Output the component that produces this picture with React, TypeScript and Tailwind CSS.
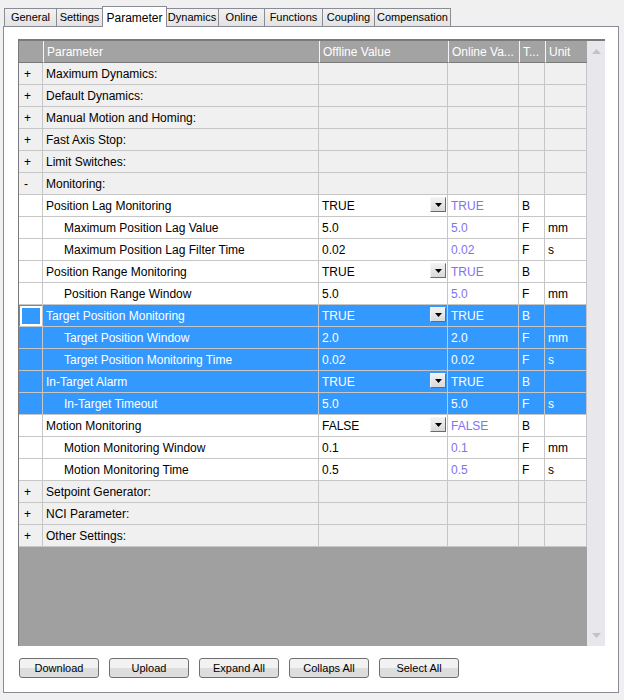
import React from 'react';

type Row = {
  sign?: string;
  name: string;
  level: 0 | 1 | 2;
  offline?: string;
  online?: string;
  type?: string;
  unit?: string;
  combo?: boolean;
  selected?: boolean;
  focused?: boolean;
};

const rows: Row[] = [
  { sign: '+', name: 'Maximum Dynamics:', level: 0 },
  { sign: '+', name: 'Default Dynamics:', level: 0 },
  { sign: '+', name: 'Manual Motion and Homing:', level: 0 },
  { sign: '+', name: 'Fast Axis Stop:', level: 0 },
  { sign: '+', name: 'Limit Switches:', level: 0 },
  { sign: '-', name: 'Monitoring:', level: 0 },
  { name: 'Position Lag Monitoring', level: 1, offline: 'TRUE', online: 'TRUE', type: 'B', combo: true },
  { name: 'Maximum Position Lag Value', level: 2, offline: '5.0', online: '5.0', type: 'F', unit: 'mm' },
  { name: 'Maximum Position Lag Filter Time', level: 2, offline: '0.02', online: '0.02', type: 'F', unit: 's' },
  { name: 'Position Range Monitoring', level: 1, offline: 'TRUE', online: 'TRUE', type: 'B', combo: true },
  { name: 'Position Range Window', level: 2, offline: '5.0', online: '5.0', type: 'F', unit: 'mm' },
  { name: 'Target Position Monitoring', level: 1, offline: 'TRUE', online: 'TRUE', type: 'B', combo: true, selected: true, focused: true },
  { name: 'Target Position Window', level: 2, offline: '2.0', online: '2.0', type: 'F', unit: 'mm', selected: true },
  { name: 'Target Position Monitoring Time', level: 2, offline: '0.02', online: '0.02', type: 'F', unit: 's', selected: true },
  { name: 'In-Target Alarm', level: 1, offline: 'TRUE', online: 'TRUE', type: 'B', combo: true, selected: true },
  { name: 'In-Target Timeout', level: 2, offline: '5.0', online: '5.0', type: 'F', unit: 's', selected: true },
  { name: 'Motion Monitoring', level: 1, offline: 'FALSE', online: 'FALSE', type: 'B', combo: true },
  { name: 'Motion Monitoring Window', level: 2, offline: '0.1', online: '0.1', type: 'F', unit: 'mm' },
  { name: 'Motion Monitoring Time', level: 2, offline: '0.5', online: '0.5', type: 'F', unit: 's' },
  { sign: '+', name: 'Setpoint Generator:', level: 0 },
  { sign: '+', name: 'NCI Parameter:', level: 0 },
  { sign: '+', name: 'Other Settings:', level: 0 },
];

// widths taken from the tab strip
const tabs = [
  { label: 'General', w: 'w-[53px]' },
  { label: 'Settings', w: 'w-[47px]' },
  { label: 'Parameter', w: 'w-[65px]' },
  { label: 'Dynamics', w: 'w-[54px]' },
  { label: 'Online', w: 'w-[47px]' },
  { label: 'Functions', w: 'w-[59px]' },
  { label: 'Coupling', w: 'w-[53px]' },
  { label: 'Compensation', w: 'w-[77px]' },
];
const buttons = ['Download', 'Upload', 'Expand All', 'Collaps All', 'Select All'];

const cols = 'grid grid-cols-[24px_276px_129px_71px_26px_42px]';

function ComboButton() {
  return (
    <div className="absolute right-[1px] top-[2px] flex h-[15px] w-[16px] items-center justify-center border border-t-[#f4f4f4] border-l-[#f4f4f4] border-r-[#6b6b6b] border-b-[#6b6b6b] bg-gradient-to-b from-[#f2f2f2] to-[#d9d9d9]">
      <svg width="7" height="4" viewBox="0 0 7 4">
        <polygon points="0,0 7,0 3.5,4" fill="#000" />
      </svg>
    </div>
  );
}

function GridRow({ r }: { r: Row }) {
  const group = r.level === 0;
  const bg = r.selected ? 'bg-[#3399ff]' : group ? 'bg-[#f0f0f0]' : 'bg-white';
  const text = r.selected ? 'text-white' : 'text-black';
  const cell = `h-[22px] border-r border-b border-[#c6c6c6] flex items-center overflow-hidden whitespace-nowrap ${bg}`;
  const pad = r.level === 2 ? 'pl-[21px]' : 'pl-[3px]';
  return (
    <div className={`${cols} ${text}`}>
      <div className={`${cell} pl-[5px]`}>
        {r.focused ? <div className="h-[20px] w-[22px] -ml-[4px] border-2 border-white" /> : r.sign}
      </div>
      <div className={`${cell} ${pad}`}>{r.name}</div>
      <div className={`${cell} relative pl-[3px]`}>
        {r.offline}
        {r.combo && <ComboButton />}
      </div>
      <div className={`${cell} pl-[3px] ${r.selected ? 'text-white' : 'text-[#8073f2]'}`}>{r.online}</div>
      <div className={`${cell} pl-[3px]`}>{r.type}</div>
      <div className={`${cell} pl-[3px]`}>{r.unit}</div>
    </div>
  );
}

export default function App() {
  return (
    <div
      className="h-[700px] w-[624px] bg-[#f0f0f0] text-[12px] text-black"
      style={{ fontFamily: '"Liberation Sans", Arial, sans-serif' }}
    >
      {/* tab strip */}
      <div className="flex h-[26px] items-end pl-[4px] text-[11px]">
        {tabs.map((t) => {
          const active = t.label === 'Parameter';
          return (
            <div
              key={t.label}
              className={
                active
                  ? `relative z-10 -mb-[1px] -mx-[1px] flex h-[21px] items-start justify-center border border-b-0 border-[#898c95] bg-white pt-[2px] text-[12px] ${t.w}`
                  : `-ml-[1px] first:ml-0 flex h-[18px] items-center justify-center border border-b-0 border-[#898c95] bg-gradient-to-b from-[#f2f2f2] to-[#e3e3e3] ${t.w}`
              }
            >
              {t.label}
            </div>
          );
        })}
      </div>

      {/* panel */}
      <div className="mx-[3px] h-[667px] w-[616px] border border-[#898c95] bg-white pl-[14px] pt-[12px]">
        <div className="flex h-[607px] w-[587px] border-t-2 border-l border-[#7a7a7a]">
          <div className="flex w-[568px] flex-col bg-[#a0a0a0]">
            <div className={`${cols} text-white`}>
              {['', 'Parameter', 'Offline Value', 'Online Va...', 'T...', 'Unit'].map((h, i) => (
                <div
                  key={i}
                  className={`h-[22px] flex items-center whitespace-nowrap overflow-hidden pl-[3px] border-b border-[#7a7a7a] bg-[#a3a3a3] ${i > 0 ? 'border-l border-l-[#f4f4f4]' : ''}`}
                >
                  {h}
                </div>
              ))}
            </div>
            {rows.map((r) => (
              <GridRow key={r.name} r={r} />
            ))}
          </div>
          {/* scrollbar */}
          <div className="flex w-[18px] flex-col items-center justify-between bg-[#e8e8ec] py-[8px]">
            <svg width="9" height="5" viewBox="0 0 9 5">
              <polygon points="0,5 9,5 4.5,0" fill="#c2c3c9" />
            </svg>
            <svg width="9" height="5" viewBox="0 0 9 5">
              <polygon points="0,0 9,0 4.5,5" fill="#c2c3c9" />
            </svg>
          </div>
        </div>

        {/* buttons */}
        <div className="mt-[12px] flex gap-[10px] pl-[1px] text-[11px]">
          {buttons.map((b) => (
            <div
              key={b}
              className="flex h-[20px] w-[80px] items-center justify-center rounded-[3px] border border-[#707070] bg-gradient-to-b from-[#f2f2f2] from-50% to-[#dddddd] to-50%"
            >
              {b}
            </div>
          ))}
        </div>
      </div>
    </div>
  );
}
